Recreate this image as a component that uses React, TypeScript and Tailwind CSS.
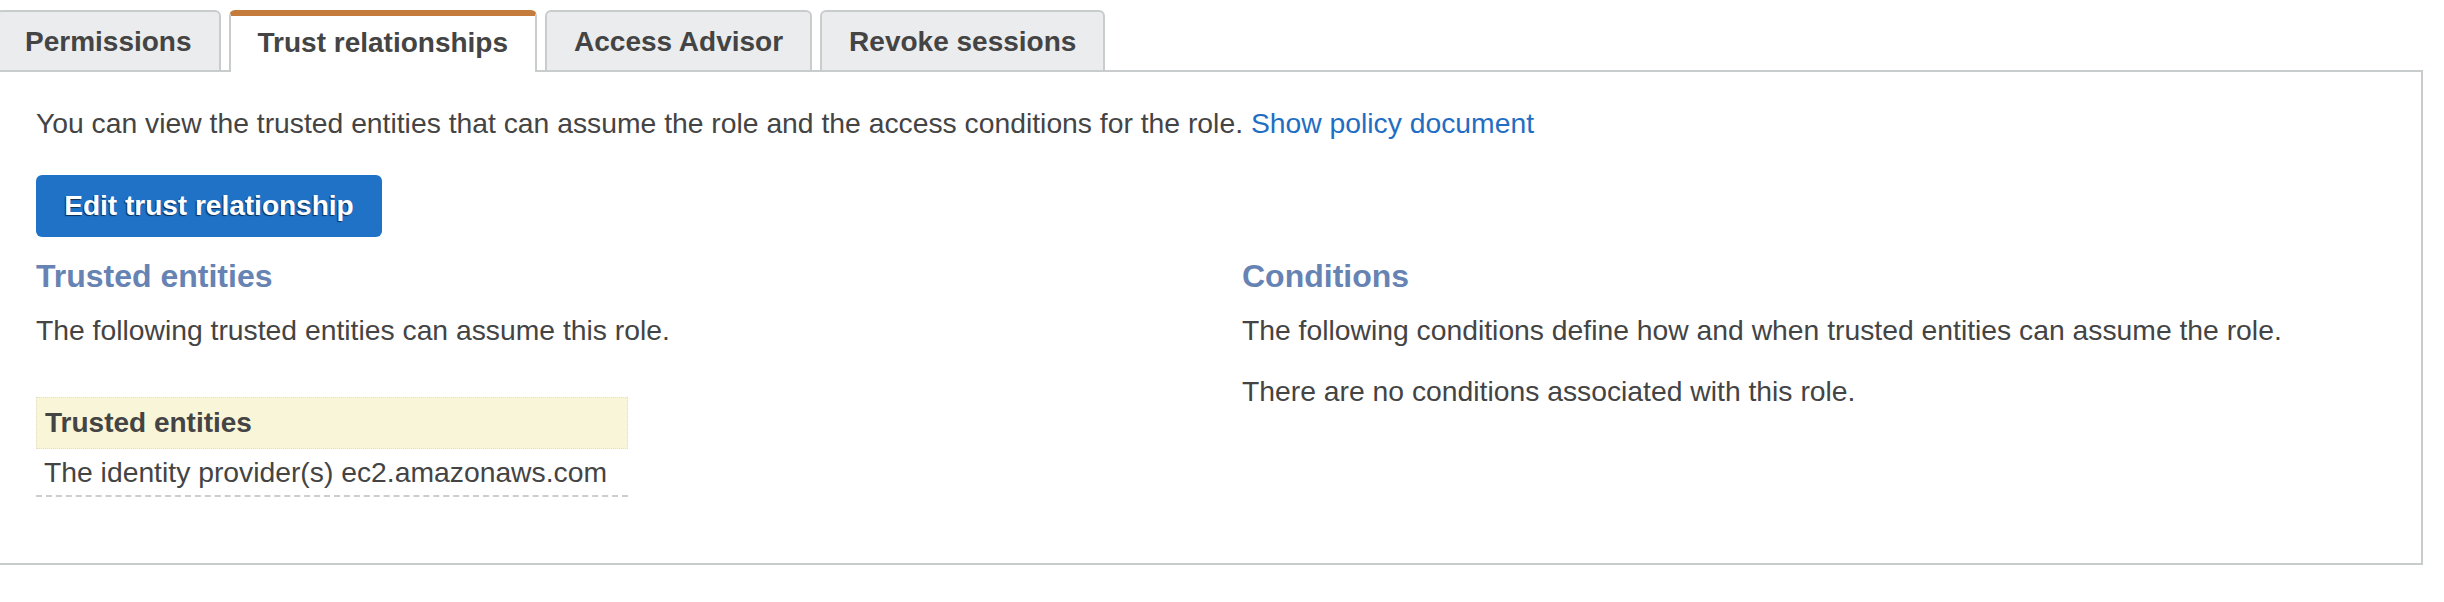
import React from "react";

const tabs = ["Permissions", "Trust relationships", "Access Advisor", "Revoke sessions"];

const Tab: React.FC<{ label: string; active?: boolean }> = ({ label, active }) =>
  active ? (
    <div className="relative z-10 -mb-[2px] flex h-[62px] items-center rounded-t-[6px] border-x-2 border-t-[6px] border-x-[#c9cccc] border-t-[#c47b3c] bg-white px-[27px] pb-[2px] text-[28px] font-bold text-[#444]">
      {label}
    </div>
  ) : (
    <div className="relative z-10 -mb-[2px] flex h-[62px] items-center rounded-t-[6px] border-2 border-[#c9cccc] bg-[#ebeced] px-[27px] pt-[2px] text-[28px] font-bold text-[#444]">
      {label}
    </div>
  );

const App: React.FC = () => {
  return (
    <div className="h-[602px] w-[2444px] overflow-hidden bg-white font-['Liberation_Sans',Arial,sans-serif] text-[#444]">
      <div className="-ml-[4px] mr-[21px] pt-[10px]">
        <div className="flex items-end gap-[8px]">
          {tabs.map((t) => (
            <Tab key={t} label={t} active={t === "Trust relationships"} />
          ))}
        </div>

        <div className="h-[495px] border-2 border-[#c9cccc] pl-[38px] pt-[31px]">
          <p className="text-[28.3px] leading-[40px]">
            You can view the trusted entities that can assume the role and the access conditions for the role.{" "}
            <a className="text-[#1f6ec3]">Show policy document</a>
          </p>

          <button className="mt-[32px] h-[62px] w-[346px] rounded-[6px] bg-[#1f72c6] text-[28px] font-bold text-white [text-shadow:-1px_1px_1px_rgba(0,0,0,0.6)]">
            Edit trust relationship
          </button>

          <div className="mt-[19px] flex">
            <div className="w-[1206px]">
              <h2 className="text-[32px] font-bold leading-[40px] text-[#6683b3]">Trusted entities</h2>
              <p className="mt-[14px] text-[28.3px] leading-[40px]">
                The following trusted entities can assume this role.
              </p>
              <div className="mt-[47px] w-[592px]">
                <div className="flex h-[52px] items-center border border-dotted border-[#e4e0c2] bg-[#f8f5d8] px-[8px] text-[28px] font-bold">
                  Trusted entities
                </div>
                <div className="flex h-[48px] items-center border-b-2 border-dashed border-[#cdcdcd] px-[8px] text-[28.3px]">
                  The identity provider(s) ec2.amazonaws.com
                </div>
              </div>
            </div>

            <div className="flex-1">
              <h2 className="text-[32px] font-bold leading-[40px] text-[#6683b3]">Conditions</h2>
              <p className="mt-[14px] text-[28.3px] leading-[40px]">
                The following conditions define how and when trusted entities can assume the role.
              </p>
              <p className="mt-[21px] text-[28.3px] leading-[40px]">
                There are no conditions associated with this role.
              </p>
            </div>
          </div>
        </div>
      </div>
    </div>
  );
};

export default App;
